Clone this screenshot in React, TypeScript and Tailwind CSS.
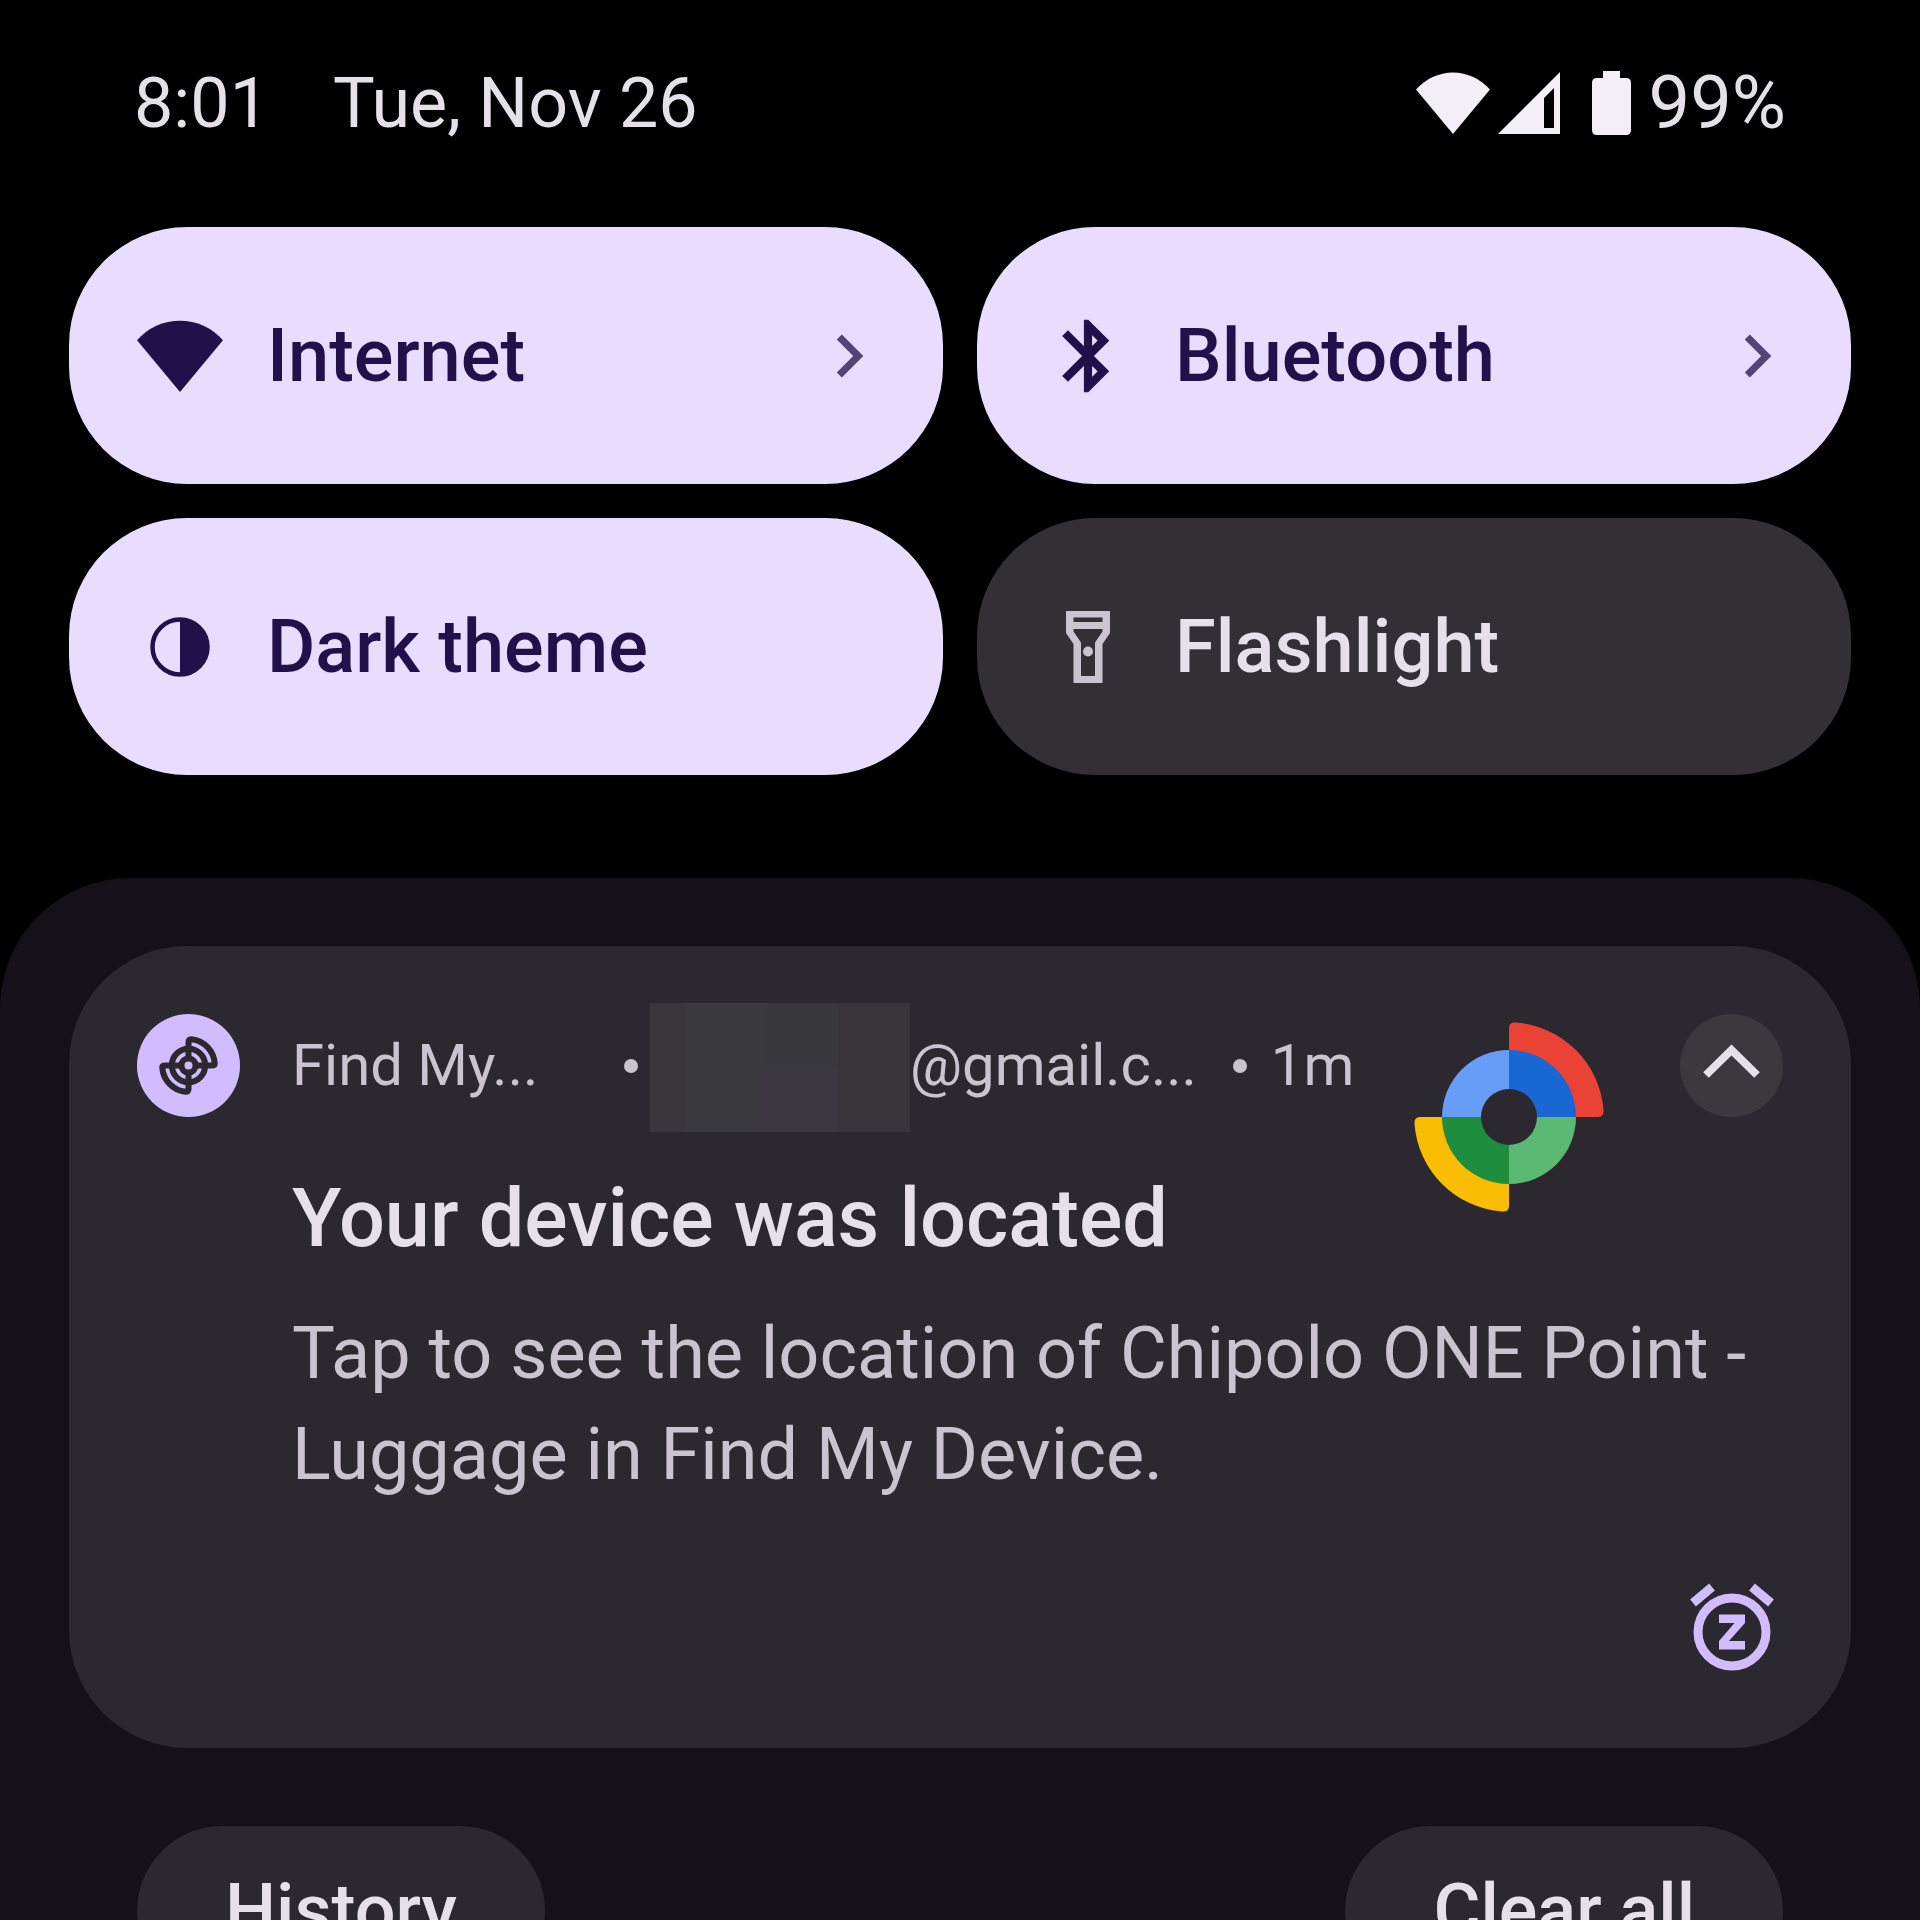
import React, { useState } from 'react';
import clsx from 'clsx';

function WifiIcon({ className }: { className?: string }) {
  return (
    <svg viewBox="0 0 74 62" className={className} fill="currentColor" aria-hidden="true">
      <path d="M0 17.5A49 49 0 0 1 74 17.5L37 62z" />
    </svg>
  );
}

function SignalIcon() {
  return (
    <svg viewBox="0 0 62 62" className="w-[62px] h-[62px]" fill="currentColor" fillRule="evenodd" aria-hidden="true">
      <path d="M62 0V62H0zM56 16L46 26V56H56z" />
    </svg>
  );
}

function BatteryIcon() {
  return (
    <svg viewBox="0 0 39 64" className="w-[39px] h-16" fill="currentColor" aria-hidden="true">
      <path d="M11 0H28V7H34Q39 7 39 12V59Q39 64 34 64H5Q0 64 0 59V12Q0 7 5 7H11z" />
    </svg>
  );
}

function BluetoothIcon() {
  return (
    <svg viewBox="0 0 24 24" className="w-[86px] h-[86px]" fill="currentColor" stroke="currentColor" strokeWidth="0.3" aria-hidden="true">
      <path d="M17.71 7.71L12 2h-1v7.59L6.41 5 5 6.41 10.59 12 5 17.59 6.41 19 11 14.41V22h1l5.71-5.71-4.3-4.29 4.3-4.29zM13 5.83l1.88 1.88L13 9.59V5.83zm1.88 10.46L13 18.17v-3.76l1.88 1.88z" />
    </svg>
  );
}

function DarkThemeIcon() {
  return (
    <svg viewBox="0 0 86 86" className="w-[86px] h-[86px]" aria-hidden="true">
      <circle cx="43" cy="43" r="27.5" fill="none" stroke="currentColor" strokeWidth="4.5" />
      <path d="M43 14a29 29 0 0 1 0 58z" fill="currentColor" />
    </svg>
  );
}

function FlashlightIcon() {
  return (
    <svg viewBox="0 0 86 86" className="w-[86px] h-[86px]" fill="#cac4d0" fillRule="evenodd" aria-hidden="true">
      <path d="M21 7H65V29L57.5 40V79H28.5V40L21 29zM28.5 13.5V18H57.5V13.5zM28.5 25V27.5L36 38.5V72H50V38.5L57.5 27.5V25z" />
      <circle cx="43" cy="47.5" r="5" />
    </svg>
  );
}

function ChevronRight() {
  return (
    <svg viewBox="0 0 24 24" className="w-[86px] h-[86px] opacity-75" fill="currentColor" aria-hidden="true">
      <path d="M8.59 16.59L13.17 12 8.59 7.41 10 6l6 6-6 6z" />
    </svg>
  );
}

function RadarIcon() {
  return (
    <svg viewBox="-51 -51 102 102" className="w-full h-full" fill="none" stroke="#2c282f" strokeWidth="6" strokeLinejoin="round" aria-hidden="true">
      <circle r="16.5" />
      <circle r="7" />
      <path d="M0 -7V-23Q0 -26 3 -26A26 26 0 0 1 26 -2Q26 0 23 0H7" />
      <path d="M0 7V23Q0 26 -3 26A26 26 0 0 1 -26 2Q-26 0 -23 0H-7" />
    </svg>
  );
}

function FindMyLogo() {
  return (
    <svg viewBox="-95 -95 190 190" className="w-[190px] h-[190px]" aria-hidden="true">
      <path d="M0 -67V-89Q0 -95 7 -94.5A95 95 0 0 1 94.5 -7Q95 0 89 0H67z" fill="#ea4335" />
      <path d="M0 67V89Q0 95 -7 94.5A95 95 0 0 1 -94.5 7Q-95 0 -89 0H-67z" fill="#fbbc04" />
      <path d="M0 -67A67 67 0 0 1 67 0H28A28 28 0 0 0 0 -28z" fill="#1967d2" />
      <path d="M67 0A67 67 0 0 1 0 67V28A28 28 0 0 0 28 0z" fill="#5bb974" />
      <path d="M0 67A67 67 0 0 1 -67 0H-28A28 28 0 0 0 0 28z" fill="#1e8e3e" />
      <path d="M-67 0A67 67 0 0 1 0 -67V-28A28 28 0 0 0 -28 0z" fill="#669df6" />
    </svg>
  );
}

function SnoozeIcon() {
  return (
    <svg viewBox="-51 -51 102 102" className="w-[102px] h-[102px]" fill="none" stroke="#d0bcff" aria-hidden="true">
      <circle cy="3" r="34" strokeWidth="9" />
      <path d="M-39 -26L-20 -42M39 -26L20 -42" strokeWidth="9" />
      <path d="M-13 -14.5H13V-6L-3 12H13V20.5H-13V12L2.5 -6H-13z" fill="#d0bcff" stroke="none" />
    </svg>
  );
}

const tiles = [
  { label: 'Internet', icon: <WifiIcon className="w-[86px] h-[72px]" />, on: true, arrow: true },
  { label: 'Bluetooth', icon: <BluetoothIcon />, on: true, arrow: true },
  { label: 'Dark theme', icon: <DarkThemeIcon />, on: true, arrow: false },
  { label: 'Flashlight', icon: <FlashlightIcon />, on: false, arrow: false },
];

function StatusBar() {
  return (
    <header className="flex items-center justify-between px-[134px] pt-[63px] text-[70px] leading-20 text-[#e6e0e9]">
      <div className="flex gap-16">
        <span>8:01</span>
        <span>Tue, Nov 26</span>
      </div>
      <div className="flex items-center text-[#f4eff7]">
        <WifiIcon className="w-[74px] h-[62px] mr-2" />
        <SignalIcon />
        <div className="flex items-center gap-[18px] ml-8">
          <BatteryIcon />
          <span className="text-[74px] text-[#e6e0e9]">99%</span>
        </div>
      </div>
    </header>
  );
}

function QuickSettings() {
  const [active, setActive] = useState(tiles.map(t => t.on));

  return (
    <section className="grid grid-cols-2 gap-[34px] px-[69px] mt-[84px]">
      {tiles.map((tile, i) => (
        <button
          key={tile.label}
          aria-pressed={active[i]}
          onClick={() => setActive(active.map((v, n) => (n === i ? !v : v)))}
          className={clsx(
            'flex items-center h-[257px] rounded-[118px] pl-[68px] pr-[51px] text-[74px] font-medium',
            active[i] ? 'bg-[#e8ddff] text-[#22104a]' : 'bg-[#322f35] text-[#e6e0e9]'
          )}
        >
          {tile.icon}
          <span className="ml-11 flex-1 text-left">{tile.label}</span>
          {tile.arrow && <ChevronRight />}
        </button>
      ))}
    </section>
  );
}

// hides the first part of the account address
function RedactedName() {
  return (
    <span className="grid grid-cols-[36px_76px_76px_72px] grid-rows-2 w-[260px] h-[129px] ml-3 mt-1 shrink-0">
      <span className="row-span-2 bg-[#3a373c]" />
      <span className="row-span-2 bg-[#3a393d]" />
      <span className="bg-[#39393d]" />
      <span className="row-span-2 bg-[#38353a]" />
      <span className="bg-[#3b393f]" />
    </span>
  );
}

function NotificationCard() {
  return (
    <article className="rounded-[118px] bg-[#2c282f] p-[68px] text-[#cac4d0]">
      <div className="flex items-start">
        <div className="w-[103px] h-[103px] rounded-full bg-[#d0bcff] shrink-0">
          <RadarIcon />
        </div>
        <div className="flex-1 ml-[52px]">
          <div className="flex items-center h-[103px] text-[58px] whitespace-nowrap">
            <span className="w-[332px]">Find My...</span>
            <span className="w-3.5 h-3.5 rounded-full bg-[#cac4d0]" />
            <RedactedName />
            <span>@gmail.c...</span>
            <span className="w-3.5 h-3.5 rounded-full bg-[#cac4d0] ml-9" />
            <span className="ml-6">1m</span>
          </div>
          <h2 className="mt-[54px] text-[81px] leading-24 font-medium text-[#e6e0e9] whitespace-nowrap">Your device was located</h2>
        </div>
        <div className="mt-2 mr-[76px]">
          <FindMyLogo />
        </div>
        <button aria-label="Collapse" className="w-[103px] h-[103px] rounded-full bg-[#3b383e] text-[#e6e0e9] shrink-0">
          <svg viewBox="0 0 103 103" className="w-full h-full" fill="none" stroke="currentColor" strokeWidth="8" aria-hidden="true">
            <path d="M26 61L51.5 36L77 61" />
          </svg>
        </button>
      </div>
      <p className="ml-[155px] mt-9 text-[72px] leading-[101px]">
        Tap to see the location of Chipolo ONE Point - Luggage in Find My Device.
      </p>
      <div className="flex justify-end mt-[73px]">
        <button aria-label="Snooze">
          <SnoozeIcon />
        </button>
      </div>
    </article>
  );
}

export default function App() {
  return (
    <div className="h-screen overflow-hidden flex flex-col bg-black font-[Roboto,sans-serif]">
      <StatusBar />
      <QuickSettings />
      <main className="flex-1 mt-[103px] rounded-t-[130px] bg-[#141218] px-[69px] pt-[68px]">
        <NotificationCard />
        <div className="flex justify-between items-start px-[68px] mt-[78px] text-[72px] leading-20 font-medium text-[#e6e0e9]">
          <button className="h-[170px] rounded-full bg-[#2c282f] px-[88px]">History</button>
          <button className="h-[170px] rounded-full bg-[#2c282f] px-[88px]">Clear all</button>
        </div>
      </main>
    </div>
  );
}
